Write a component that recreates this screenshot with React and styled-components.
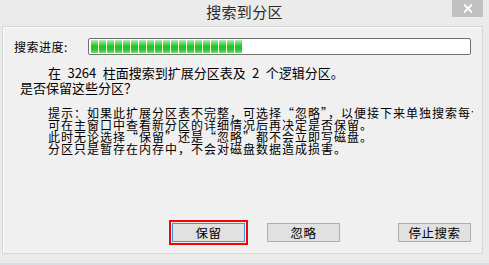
import React from "react";
import styled, { createGlobalStyle } from "styled-components";

const Global = createGlobalStyle`
  html, body { margin: 0; padding: 0; background: #ebebeb; }
  body { font-family: "Noto Sans CJK SC", "Noto Sans", sans-serif; color: #000; }
  * { box-sizing: border-box; }
`;

const Window = styled.div`
  width: 489px;
  height: 265px;
  background: #ebebeb;
  display: flex;
  flex-direction: column;
  overflow: hidden;
`;

const TitleBar = styled.div`
  height: 26px;
  display: grid;
  grid-template-columns: 1fr auto 1fr;
  align-items: start;
`;

const Title = styled.div`
  grid-column: 2;
  font-size: 15px;
  line-height: 24px;
  color: #2b2b2b;
  letter-spacing: 0.3px;
`;

const CloseButton = styled.div`
  grid-column: 3;
  justify-self: end;
  margin-right: 6px;
  width: 31px;
  height: 17px;
  background: #c1c1c1;
  display: flex;
  align-items: center;
  justify-content: center;
`;

const Panel = styled.div`
  margin: 0 6px 0 2px;
  height: 228px;
  background: #f0f0f0;
  border: 1px solid #d6d6d6;
  box-shadow: inset 1px 1px 0 #fbfbfb;
  display: flex;
  flex-direction: column;
  padding: 11px;
`;

const ProgressRow = styled.div`
  display: flex;
  align-items: center;
  height: 17px;
`;

const Label = styled.div`
  width: 74px;
  font-size: 12px;
  line-height: 17px;
  letter-spacing: 0.5px;
  white-space: nowrap;
`;

const Bar = styled.div`
  width: 384px;
  height: 17px;
  background: #fff;
  border: 1px solid #707070;
  border-radius: 2px;
  padding: 1px 2px;
  display: flex;
  gap: 1px;
`;

const Segment = styled.div`
  width: 7px;
  height: 100%;
  background: linear-gradient(
    to bottom,
    #b6efb6 0%,
    #5fd85f 25%,
    #1fc21f 50%,
    #2ec82e 75%,
    #6fdc6f 100%
  );
`;

const Intro = styled.div`
  margin-top: 10px;
  padding-left: 6px;
  font-size: 13px;
  line-height: 15px;
  white-space: pre;
  word-spacing: 3.5px;
`;

const IntroFirst = styled.div`
  text-indent: 28px;
`;

const Hint = styled.div`
  margin-top: 12px;
  margin-left: 34px;
  width: 425px;
  overflow: hidden;
  font-size: 12px;
  line-height: 12px;
  letter-spacing: 1px;
  white-space: nowrap;
`;

const ButtonRow = styled.div`
  margin-top: auto;
  display: flex;
  align-items: center;
  padding-left: 158px;
  gap: 22px;
`;

const Button = styled.div`
  width: 73px;
  height: 19px;
  background: #e1e1e1;
  border: 1px solid ${(p) => (p.$focused ? "#3d95de" : "#adadad")};
  outline: ${(p) => (p.$focused ? "2px solid #ff0000" : "none")};
  outline-offset: 1px;
  font-size: 12.5px;
  line-height: 17px;
  letter-spacing: 0.5px;
  text-align: center;
  color: #000;
  margin-left: ${(p) => (p.$pushRight ? "auto" : "0")};
`;

const Footer = styled.div`
  flex: 1;
  border-bottom: 2px solid #d9dee6;
`;

export default function App() {
  const segments = Array.from({ length: 19 });
  return (
    <>
      <Global />
      <Window>
        <TitleBar>
          <Title>搜索到分区</Title>
          <CloseButton>
            <svg width="10" height="9" viewBox="0 0 10 9">
              <path d="M1 0.5 L9 8.5 M9 0.5 L1 8.5" stroke="#fff" strokeWidth="1.8" />
            </svg>
          </CloseButton>
        </TitleBar>
        <Panel>
          <ProgressRow>
            <Label>搜索进度:</Label>
            <Bar>
              {segments.map((_, i) => (
                <Segment key={i} />
              ))}
            </Bar>
          </ProgressRow>
          <Intro>
            <IntroFirst>在 3264 柱面搜索到扩展分区表及 2 个逻辑分区。</IntroFirst>
            <div>是否保留这些分区？</div>
          </Intro>
          <Hint>
            <div>提示：如果此扩展分区表不完整，可选择“忽略”，以便接下来单独搜索每个分区。</div>
            <div>可在主窗口中查看新分区的详细情况后再决定是否保留。</div>
            <div>此时无论选择“保留”还是“忽略”都不会立即写磁盘。</div>
            <div>分区只是暂存在内存中，不会对磁盘数据造成损害。</div>
          </Hint>
          <ButtonRow>
            <Button $focused>保留</Button>
            <Button>忽略</Button>
            <Button $pushRight>停止搜索</Button>
          </ButtonRow>
        </Panel>
        <Footer />
      </Window>
    </>
  );
}
